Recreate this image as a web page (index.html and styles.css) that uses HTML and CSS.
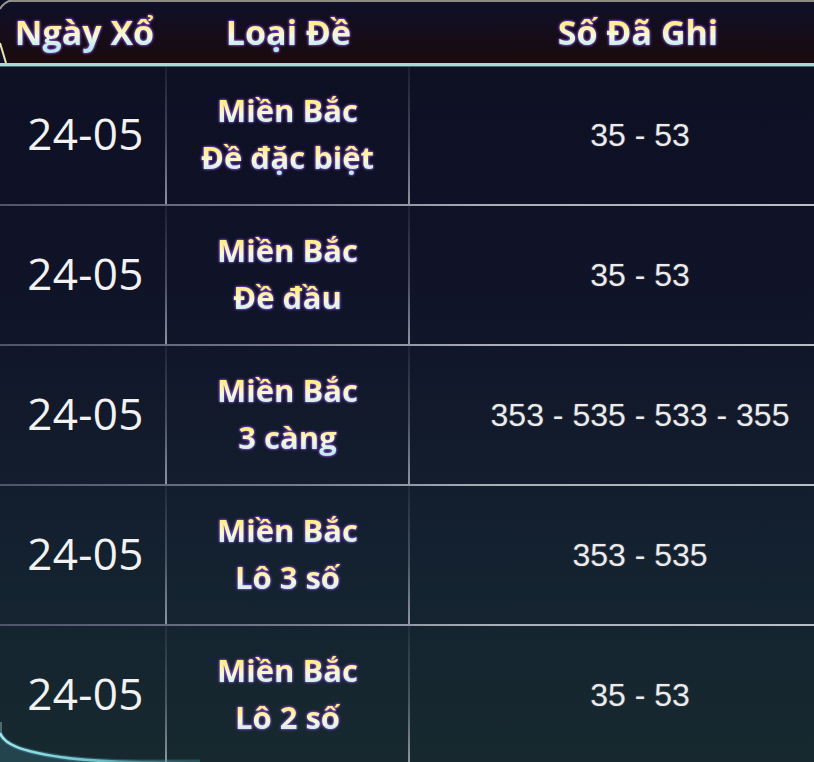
FILE: index.html
```html
<!DOCTYPE html>
<html lang="vi">
<head>
<meta charset="utf-8">
<title>Lịch sử ghi số</title>
<link rel="stylesheet" href="styles.css">
</head>
<body>
<div class="board">
  <div class="head">
    <div class="hc c1"><span class="gt">Ngày Xổ</span></div>
    <div class="hc c2"><span class="gt">Loại Đề</span></div>
    <div class="hc c3"><span class="gt">Số Đã Ghi</span></div>
  </div>
  <div class="row">
    <div class="cell c1 date">24-05</div>
    <div class="cell c2 type"><span class="gt">Miền Bắc</span><span class="gt">Đề đặc biệt</span></div>
    <div class="cell c3 nums">35 - 53</div>
  </div>
  <div class="row">
    <div class="cell c1 date">24-05</div>
    <div class="cell c2 type"><span class="gt">Miền Bắc</span><span class="gt">Đề đầu</span></div>
    <div class="cell c3 nums">35 - 53</div>
  </div>
  <div class="row">
    <div class="cell c1 date">24-05</div>
    <div class="cell c2 type"><span class="gt">Miền Bắc</span><span class="gt">3 càng</span></div>
    <div class="cell c3 nums">353 - 535 - 533 - 355</div>
  </div>
  <div class="row">
    <div class="cell c1 date">24-05</div>
    <div class="cell c2 type"><span class="gt">Miền Bắc</span><span class="gt">Lô 3 số</span></div>
    <div class="cell c3 nums">353 - 535</div>
  </div>
  <div class="row">
    <div class="cell c1 date">24-05</div>
    <div class="cell c2 type"><span class="gt">Miền Bắc</span><span class="gt">Lô 2 số</span></div>
    <div class="cell c3 nums">35 - 53</div>
  </div>
  <svg class="corner-top" width="24" height="70" viewBox="0 0 24 70">
    <path d="M0 0 H12 Q4 2 0 9 Z" fill="#0d0e22"/>
    <path d="M0 9 Q4 2 12 0" fill="none" stroke="#9a9690" stroke-width="2"/>
    <path d="M0 43 L6 63 L0 63 Z" fill="#0e0f24"/>
    <path d="M0 43 L6 63" fill="none" stroke="#e6e6b0" stroke-width="2"/>
  </svg>
  <svg class="corner-bottom" width="200" height="40" viewBox="0 0 200 40">
    <defs>
      <linearGradient id="fade" x1="0" y1="0" x2="1" y2="0">
        <stop offset="0" stop-color="#9fe6ee"/>
        <stop offset="0.5" stop-color="#6cc2cc"/>
        <stop offset="1" stop-color="#3a7480" stop-opacity="0"/>
      </linearGradient>
    </defs>
    <path d="M1 0 L1 11" stroke="#4a6a74" stroke-width="2" fill="none"/>
    <path d="M0 11 C 4 22, 20 29, 60 35 S 150 40, 200 40 L0 40 Z" fill="#2a4f5a" opacity="0.7"/>
    <path d="M0 11 C 4 22, 20 29, 60 35 S 150 40, 200 40" fill="none" stroke="#4aa0b0" stroke-width="5" opacity="0.35"/>
    <path d="M0 11 C 4 22, 20 29, 60 35 S 150 40, 200 40" fill="none" stroke="url(#fade)" stroke-width="2.5"/>
  </svg>
</div>
</body>
</html>
```

FILE: styles.css
```css
html, body {
  margin: 0;
  padding: 0;
  overflow: hidden;
  background: #0d0e22;
}

.board {
  position: relative;
  width: 814px;
  height: 762px;
  overflow: hidden;
  background: linear-gradient(to bottom, #0d0e22 0%, #101428 40%, #142230 75%, #17292f 100%);
}

.head {
  display: grid;
  grid-template-columns: 167px 243px 1fr;
  height: 61px;
  border-top: 2px solid #8e8a84;
  border-bottom: 3px solid #a9d8d6;
  background: linear-gradient(to bottom, #101029 0%, #140d1c 45%, #1a0b0d 100%);
  box-shadow: 0 1px 0 #4a6a70;
}

.hc {
  display: flex;
  align-items: center;
  justify-content: center;
  font-family: "Open Sans", "Noto Sans", sans-serif;
  font-weight: 700;
  font-size: 34px;
  padding-bottom: 2px;
}

.head .c1 { padding-left: 2px; }
.head .c3 { padding-left: 52px; }

.gt {
  display: block;
  background: linear-gradient(to bottom, #ffe45a 0%, #fff09a 38%, #f2fadc 58%, #c2ecf0 82%, #b0e4ec 100%);
  -webkit-background-clip: text;
  background-clip: text;
  color: transparent;
  filter: drop-shadow(0 0 1px #8a50d0) drop-shadow(0 0 0.8px #7040b8);
}

.row {
  display: grid;
  grid-template-columns: 167px 243px 1fr;
  height: 138px;
  border-bottom: 2px solid;
  border-image: linear-gradient(to right, #50546a 0%, #747889 35%, #a8adb8 60%, #b8c0c6 100%) 1;
}

.row:first-of-type { height: 137px; }

.cell {
  display: flex;
  align-items: center;
  justify-content: center;
}

.cell.c1, .cell.c2 {
  border-right: 2px solid;
  border-image: linear-gradient(to bottom, rgba(120,125,140,0.12) 0%, rgba(140,145,158,0.45) 55%, rgba(165,170,180,0.85) 100%) 1;
}

.date {
  font-family: "Open Sans", "Noto Sans", sans-serif;
  font-weight: 400;
  font-size: 44px;
  color: #f2f2f2;
  padding-bottom: 4px;
  padding-left: 6px;
  letter-spacing: 0.3px;
}

.type {
  flex-direction: column;
  font-family: "Open Sans", "Noto Sans", sans-serif;
  font-weight: 700;
  font-size: 31px;
  line-height: 47px;
  text-align: center;
  padding-bottom: 2px;
}

.nums {
  font-family: "Liberation Sans", Arial, sans-serif;
  font-size: 32px;
  color: #ececec;
  padding-left: 56px;
  white-space: nowrap;
  text-shadow: 0 0 2px rgba(255,255,255,0.25);
}

.corner-top {
  position: absolute;
  left: 0;
  top: 0;
}

.corner-bottom {
  position: absolute;
  left: 0;
  bottom: 0;
}
```
